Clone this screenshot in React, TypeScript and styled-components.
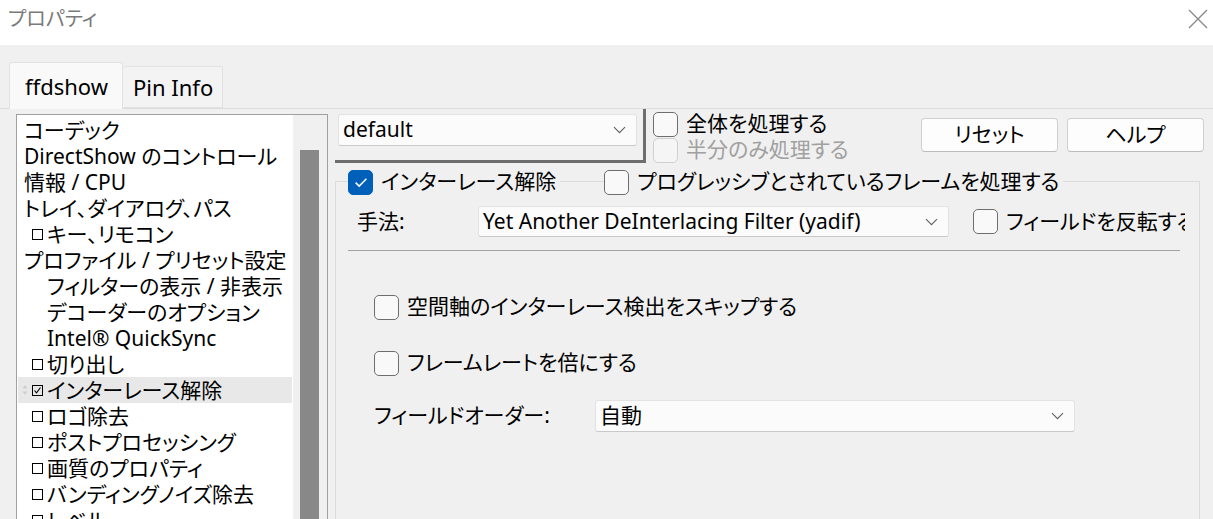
import React from "react";
import styled, { createGlobalStyle } from "styled-components";

const GlobalStyle = createGlobalStyle`
    html, body {
        margin: 0;
        padding: 0;
        background: #f0f0f0;
        overflow: hidden;
    }
    body {
        font-family: "Noto Sans", "Noto Sans CJK JP", sans-serif;
        font-feature-settings: "palt";
        line-height: 1.2;
        color: #000;
    }
`;

const Window = styled.div`
    width: 1213px;
    height: 519px;
    overflow: hidden;
    display: flex;
    flex-direction: column;
    background: #f0f0f0;
`;

const TitleBar = styled.div`
    height: 45px;
    flex: none;
    background: #fff;
    display: flex;
    align-items: center;
    justify-content: space-between;
    padding: 0 5px 0 8px;
`;

const Title = styled.span`
    font-size: 20px;
    color: #7a7a7a;
    margin-top: -7px;
`;

const CloseButton = styled.div`
    width: 20px;
    height: 20px;
    margin-top: -7px;
    display: flex;
`;

const Body = styled.div`
    flex: 1;
    min-height: 0;
    display: flex;
    flex-direction: column;
    padding-top: 17px;
`;

const TabStrip = styled.div`
    height: 46px;
    flex: none;
    display: flex;
    align-items: flex-end;
    padding-left: 9px;
    position: relative;
    z-index: 1;
`;

const Tab = styled.div<{ $active?: boolean }>`
    box-sizing: border-box;
    height: ${(p) => (p.$active ? "47px" : "42px")};
    margin-bottom: ${(p) => (p.$active ? "-1px" : "0")};
    width: ${(p) => (p.$active ? "114px" : "100px")};
    padding-left: ${(p) => (p.$active ? "15px" : "10px")};
    display: flex;
    align-items: center;
    font-size: 22px;
    background: ${(p) => (p.$active ? "#f9f9f9" : "#f3f3f3")};
    border: 1px solid #e2e2e2;
    border-bottom: ${(p) => (p.$active ? "none" : "1px solid #e2e2e2")};
    border-left: ${(p) => (p.$active ? "1px solid #e2e2e2" : "none")};
    border-radius: 3px 3px 0 0;
`;

const Page = styled.div`
    flex: 1;
    min-height: 0;
    display: flex;
    gap: 7px;
    padding: 0 9px 0 16px;
    border-top: 1px solid #dcdcdc;
`;

const ListBox = styled.div`
    flex: none;
    box-sizing: border-box;
    width: 312px;
    height: 440px;
    margin-top: 5px;
    border: 1px solid #a0a0a0;
    background: #fff;
    display: flex;
`;

const ListItems = styled.div`
    flex: 1;
    min-width: 0;
    overflow: hidden;
    padding-top: 2px;
    display: flex;
    flex-direction: column;
`;

const ListItem = styled.div<{ $indent: number; $selected?: boolean }>`
    flex: none;
    height: 26px;
    line-height: 26px;
    margin: 0 1px;
    display: flex;
    align-items: center;
    gap: 4px;
    padding-left: ${(p) => (p.$selected ? 4 : p.$indent - 1)}px;
    font-size: 21px;
    white-space: nowrap;
    background: ${(p) => (p.$selected ? "#e8e8e8" : "transparent")};
`;

const TreeBox = styled.span`
    flex: none;
    box-sizing: border-box;
    width: 11px;
    height: 11px;
    border: 1px solid #000;
    display: flex;
    align-items: center;
    justify-content: center;
`;

const SortMarker = styled.span`
    flex: none;
    width: 6px;
    display: flex;
`;

const ScrollTrack = styled.div`
    flex: none;
    width: 34px;
    background: #f0f0f0;
    padding: 35px 0 0 7px;
    box-sizing: border-box;
`;

const ScrollThumb = styled.div`
    width: 19px;
    height: 400px;
    background: #888;
`;

const RightPane = styled.div`
    flex: 1;
    display: flex;
    flex-direction: column;
`;

const TopRow = styled.div`
    display: flex;
    align-items: flex-start;
`;

const ProfileFrame = styled.div`
    box-sizing: border-box;
    width: 311px;
    height: 54px;
    padding: 5px 0 0 3px;
    border-right: 3px solid #6e6e6e;
    border-bottom: 3px solid #6e6e6e;
`;

const ProcessColumn = styled.div`
    margin-left: 7px;
    padding-top: 2px;
    display: flex;
    flex-direction: column;
`;

const ButtonGroup = styled.div`
    margin-left: auto;
    margin-top: 9px;
    display: flex;
    gap: 9px;
`;

const Button = styled.div`
    box-sizing: border-box;
    width: 137px;
    height: 34px;
    display: flex;
    align-items: center;
    justify-content: center;
    font-size: 21px;
    background: #fdfdfd;
    border: 1px solid #d0d0d0;
    border-bottom-color: #bcbcbc;
    border-radius: 4px;
`;

const Combo = styled.div<{ $width: number; $height?: number }>`
    box-sizing: border-box;
    flex: none;
    width: ${(p) => p.$width}px;
    height: ${(p) => p.$height ?? 32}px;
    display: flex;
    align-items: center;
    justify-content: space-between;
    padding: 0 10px 0 4px;
    font-size: 21px;
    white-space: nowrap;
    background: #fbfbfb;
    border: 1px solid #e3e3e3;
    border-bottom-color: #c9c9c9;
    border-radius: 3px;
`;

const CheckRow = styled.label<{ $disabled?: boolean; $width?: number }>`
    height: 26px;
    display: flex;
    align-items: center;
    gap: 8px;
    font-size: 21px;
    white-space: nowrap;
    color: ${(p) => (p.$disabled ? "#a0a0a0" : "#000")};
    ${(p) => (p.$width ? `width: ${p.$width}px; flex: none; overflow: hidden;` : "")}
`;

const CheckBox = styled.span<{ $checked?: boolean; $disabled?: boolean }>`
    flex: none;
    box-sizing: border-box;
    width: 25px;
    height: 25px;
    border-radius: 5px;
    display: flex;
    align-items: center;
    justify-content: center;
    background: ${(p) => (p.$checked ? "#005fb8" : p.$disabled ? "#f5f5f5" : "#f9f9f9")};
    border: 1px solid
        ${(p) => (p.$checked ? "#005fb8" : p.$disabled ? "#cfcfcf" : "#6e6e6e")};
`;

const GroupBox = styled.div`
    margin: 18px 4px 0 0;
    flex: 1;
    border: 1px solid #dcdcdc;
    border-bottom: none;
    display: flex;
    flex-direction: column;
`;

const GroupHeader = styled.div`
    margin-top: -13px;
    padding-left: 12px;
    display: flex;
    gap: 44px;
`;

const Legend = styled.div`
    background: #f0f0f0;
    padding-right: 4px;
`;

const FieldRow = styled.div<{ $top: number; $left: number }>`
    display: flex;
    align-items: center;
    margin-top: ${(p) => p.$top}px;
    padding-left: ${(p) => p.$left}px;
`;

const FieldLabel = styled.span<{ $width: number }>`
    flex: none;
    width: ${(p) => p.$width}px;
    font-size: 21px;
    white-space: nowrap;
`;

const Spacer = styled.span<{ $width: number }>`
    flex: none;
    width: ${(p) => p.$width}px;
`;

const Separator = styled.div`
    margin: 13px 19px 0 12px;
    height: 1px;
    background: #a3a3a3;
`;

const Chevron = () => (
    <svg width="13" height="8" viewBox="0 0 13 8">
        <path d="M1 1.2l5.5 5.5L12 1.2" fill="none" stroke="#5f5f5f" strokeWidth="1.1" />
    </svg>
);

const Check = () => (
    <svg width="14" height="11" viewBox="0 0 14 11">
        <path d="M1.6 5.6l3.6 3.5L12.4 1.8" fill="none" stroke="#fff" strokeWidth="1.5" />
    </svg>
);

const TinyCheck = () => (
    <svg width="9" height="9" viewBox="0 0 9 9">
        <path d="M1.5 4.5l2 2.3L7.5 1.5" fill="none" stroke="#000" strokeWidth="1.1" />
    </svg>
);

const UpDown = () => (
    <svg width="6" height="12" viewBox="0 0 6 12">
        <path d="M3 1L5.5 4.5H0.5ZM3 11L5.5 7.5H0.5Z" fill="#cfcfcf" />
    </svg>
);

type Item = { label: string; indent: "root" | "child" | "box"; checked?: boolean; selected?: boolean };

const items: Item[] = [
    { label: "コーデック", indent: "root" },
    { label: "DirectShow のコントロール", indent: "root" },
    { label: "情報 / CPU", indent: "root" },
    { label: "トレイ、ダイアログ、パス", indent: "root" },
    { label: "キー、リモコン", indent: "box" },
    { label: "プロファイル / プリセット設定", indent: "root" },
    { label: "フィルターの表示 / 非表示", indent: "child" },
    { label: "デコーダーのオプション", indent: "child" },
    { label: "Intel® QuickSync", indent: "child" },
    { label: "切り出し", indent: "box" },
    { label: "インターレース解除", indent: "box", checked: true, selected: true },
    { label: "ロゴ除去", indent: "box" },
    { label: "ポストプロセッシング", indent: "box" },
    { label: "画質のプロパティ", indent: "box" },
    { label: "バンディングノイズ除去", indent: "box" },
    { label: "レベル", indent: "box" },
    { label: "オフセット", indent: "box" },
];

const indents = { root: 7, child: 30, box: 15 };

const Check25 = ({
    label,
    checked,
    disabled,
    width,
}: {
    label: string;
    checked?: boolean;
    disabled?: boolean;
    width?: number;
}) => (
    <CheckRow $disabled={disabled} $width={width}>
        <CheckBox $checked={checked} $disabled={disabled}>
            {checked && <Check />}
        </CheckBox>
        {label}
    </CheckRow>
);

export default function App() {
    return (
        <Window>
            <GlobalStyle />
            <TitleBar>
                <Title>プロパティ</Title>
                <CloseButton>
                    <svg width="20" height="20" viewBox="0 0 20 20">
                        <path d="M1 1L19 19M19 1L1 19" stroke="#8a8a8a" strokeWidth="1.4" />
                    </svg>
                </CloseButton>
            </TitleBar>
            <Body>
                <TabStrip>
                    <Tab $active>ffdshow</Tab>
                    <Tab>Pin Info</Tab>
                </TabStrip>
                <Page>
                    <ListBox>
                        <ListItems>
                            {items.map((it) => (
                                <ListItem key={it.label} $indent={indents[it.indent]} $selected={it.selected}>
                                    {it.selected && (
                                        <SortMarker>
                                            <UpDown />
                                        </SortMarker>
                                    )}
                                    {it.indent === "box" && <TreeBox>{it.checked && <TinyCheck />}</TreeBox>}
                                    {it.label}
                                </ListItem>
                            ))}
                        </ListItems>
                        <ScrollTrack>
                            <ScrollThumb />
                        </ScrollTrack>
                    </ListBox>
                    <RightPane>
                        <TopRow>
                            <ProfileFrame>
                                <Combo $width={299}>
                                    default
                                    <Chevron />
                                </Combo>
                            </ProfileFrame>
                            <ProcessColumn>
                                <Check25 label="全体を処理する" />
                                <Check25 label="半分のみ処理する" disabled />
                            </ProcessColumn>
                            <ButtonGroup>
                                <Button>リセット</Button>
                                <Button>ヘルプ</Button>
                            </ButtonGroup>
                        </TopRow>
                        <GroupBox>
                            <GroupHeader>
                                <Legend>
                                    <Check25 label="インターレース解除" checked />
                                </Legend>
                                <Legend>
                                    <Check25 label="プログレッシブとされているフレームを処理する" />
                                </Legend>
                            </GroupHeader>
                            <FieldRow $top={11} $left={21}>
                                <FieldLabel $width={121}>手法:</FieldLabel>
                                <Combo $width={471} $height={31}>
                                    Yet Another DeInterlacing Filter (yadif)
                                    <Chevron />
                                </Combo>
                                <Spacer $width={24} />
                                <Check25 label="フィールドを反転する" width={212} />
                            </FieldRow>
                            <Separator />
                            <FieldRow $top={43} $left={38}>
                                <Check25 label="空間軸のインターレース検出をスキップする" />
                            </FieldRow>
                            <FieldRow $top={30} $left={38}>
                                <Check25 label="フレームレートを倍にする" />
                            </FieldRow>
                            <FieldRow $top={24} $left={38}>
                                <FieldLabel $width={221}>フィールドオーダー:</FieldLabel>
                                <Combo $width={480}>
                                    自動
                                    <Chevron />
                                </Combo>
                            </FieldRow>
                        </GroupBox>
                    </RightPane>
                </Page>
            </Body>
        </Window>
    );
}
